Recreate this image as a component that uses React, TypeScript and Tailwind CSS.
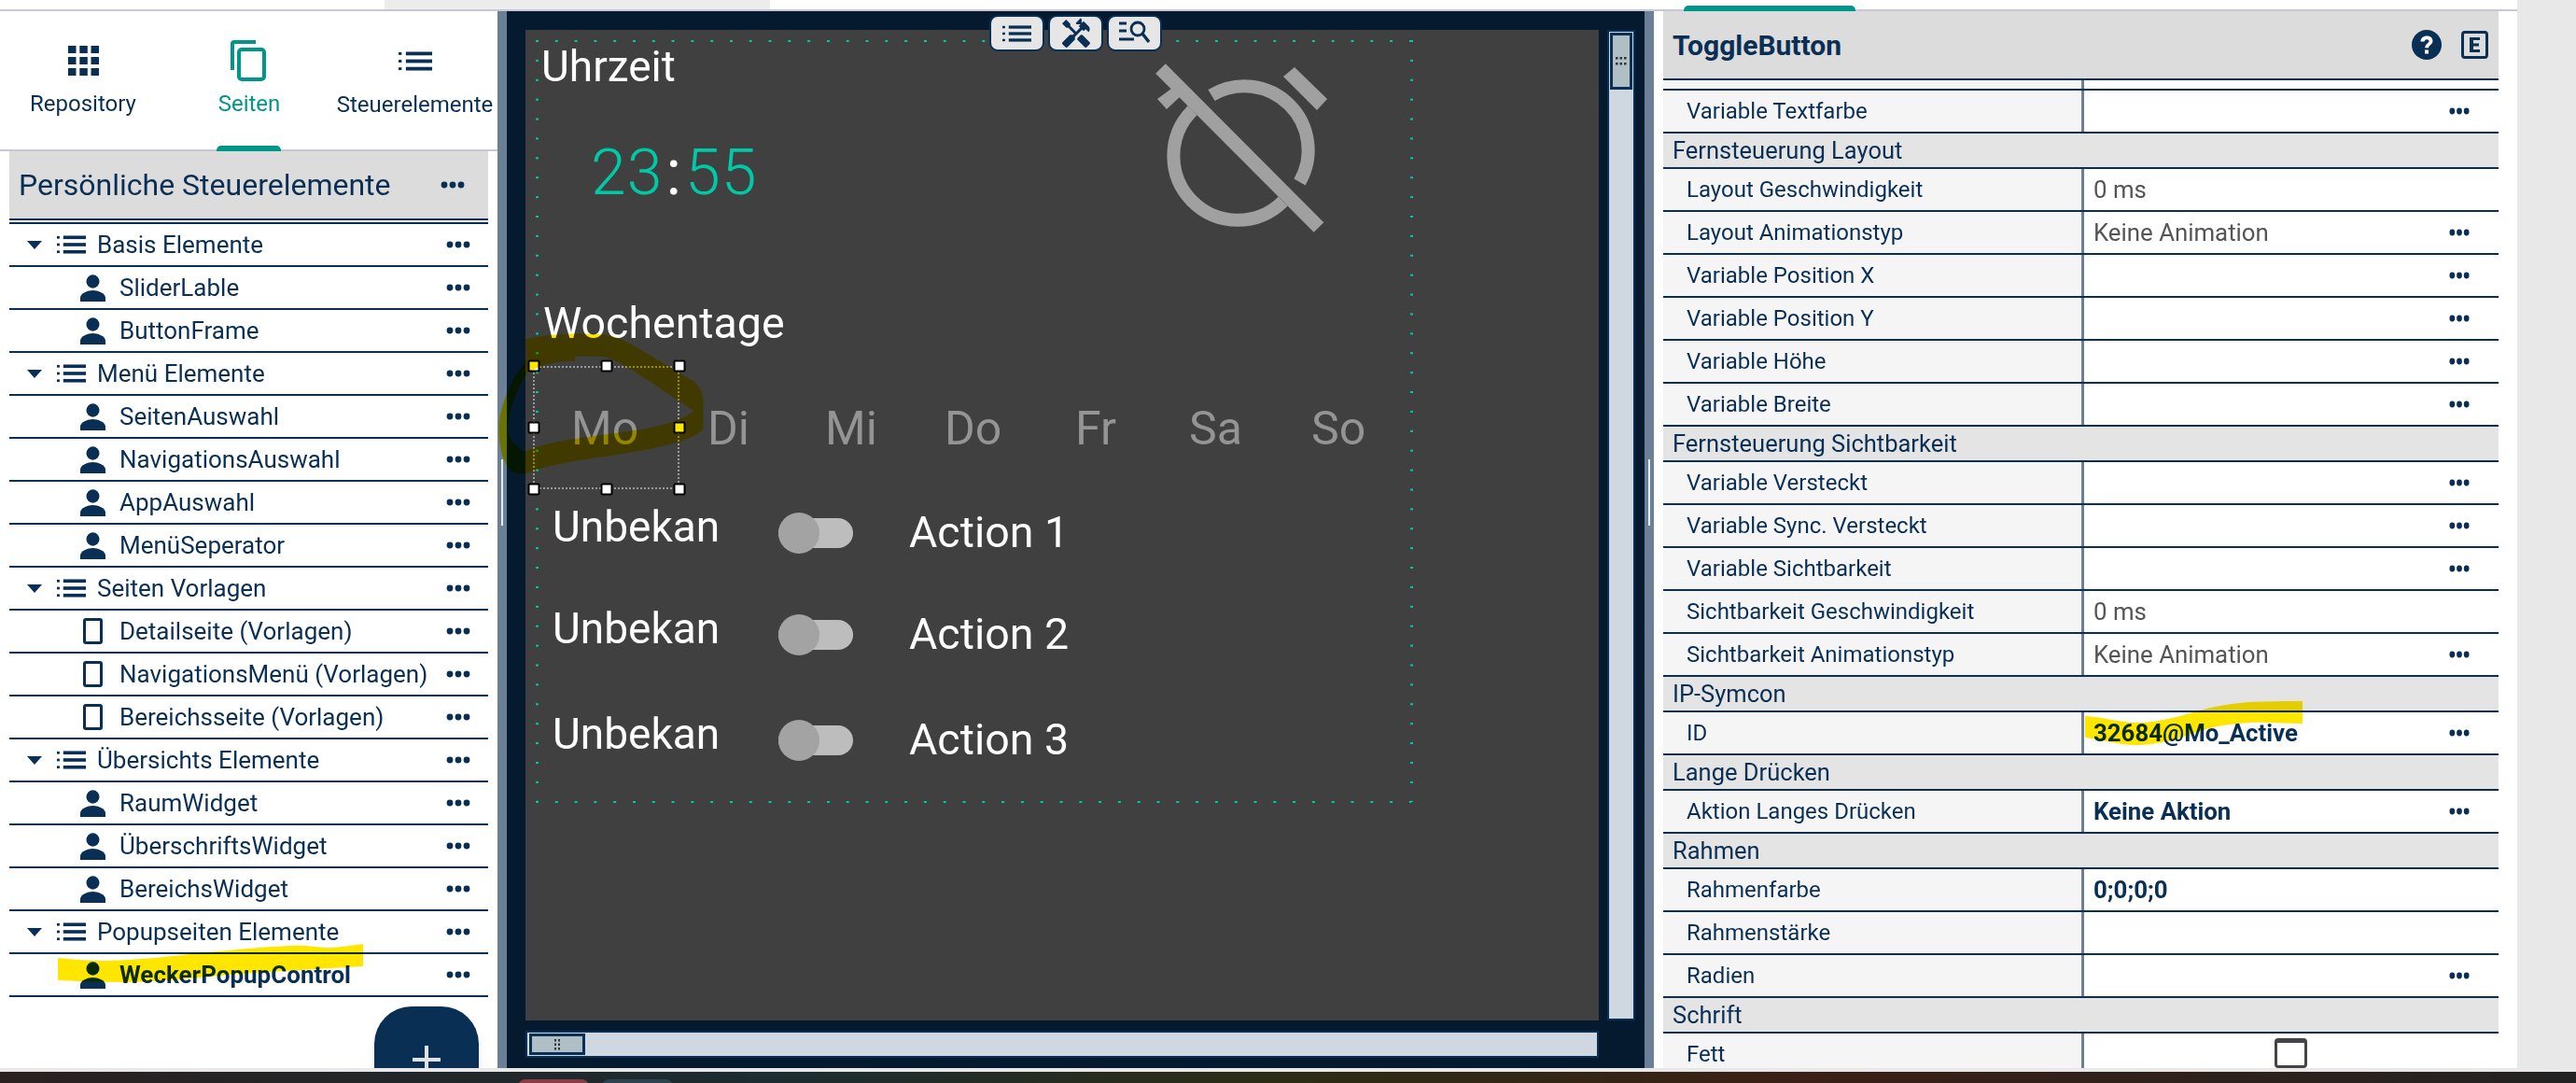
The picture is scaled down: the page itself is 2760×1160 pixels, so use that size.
import React from "react";
import { MdHandyman } from "react-icons/md";

function Dots({ className = "" }: { className?: string }) {
  return (
    <svg viewBox="0 0 26 8" className={"w-[26px] h-[8px] " + className}>
      <circle cx="4" cy="4" r="3.4" fill="#0a2f55" />
      <circle cx="13" cy="4" r="3.4" fill="#0a2f55" />
      <circle cx="22" cy="4" r="3.4" fill="#0a2f55" />
    </svg>
  );
}

function ListIcon({ className = "", color = "#0a2f55" }: { className?: string; color?: string }) {
  return (
    <svg viewBox="0 0 32 22" className={className} preserveAspectRatio="none">
      <g fill={color}>
        <rect x="0" y="1" width="3" height="3" />
        <rect x="0" y="9.5" width="3" height="3" />
        <rect x="0" y="18" width="3" height="3" />
        <rect x="7" y="0.5" width="25" height="4" />
        <rect x="7" y="9" width="25" height="4" />
        <rect x="7" y="17.5" width="25" height="4" />
      </g>
    </svg>
  );
}

function PersonIcon() {
  return (
    <svg viewBox="0 0 27 29" className="w-[27px] h-[29px]">
      <ellipse cx="13.5" cy="7.5" rx="7" ry="7.2" fill="#0a2f55" />
      <path d="M0 29v-4c0-5 8-8 13.5-8S27 20 27 25v4z" fill="#0a2f55" />
    </svg>
  );
}

type TreeItem = { t: string; kind: "group" | "person" | "page"; bold?: boolean };
const tree: TreeItem[] = [
  { t: "Basis Elemente", kind: "group" },
  { t: "SliderLable", kind: "person" },
  { t: "ButtonFrame", kind: "person" },
  { t: "Menü Elemente", kind: "group" },
  { t: "SeitenAuswahl", kind: "person" },
  { t: "NavigationsAuswahl", kind: "person" },
  { t: "AppAuswahl", kind: "person" },
  { t: "MenüSeperator", kind: "person" },
  { t: "Seiten Vorlagen", kind: "group" },
  { t: "Detailseite (Vorlagen)", kind: "page" },
  { t: "NavigationsMenü (Vorlagen)", kind: "page" },
  { t: "Bereichsseite (Vorlagen)", kind: "page" },
  { t: "Übersichts Elemente", kind: "group" },
  { t: "RaumWidget", kind: "person" },
  { t: "ÜberschriftsWidget", kind: "person" },
  { t: "BereichsWidget", kind: "person" },
  { t: "Popupseiten Elemente", kind: "group" },
  { t: "WeckerPopupControl", kind: "person", bold: true },
];

function TreeRow({ item }: { item: TreeItem }) {
  return (
    <div className="h-[46px] border-b-[2px] border-[#0a2f55] flex items-center text-[26px] text-[#0a2f55] shrink-0">
      {item.kind === "group" ? (
        <>
          <span className="ml-[14px] w-[25px] flex justify-center">
            <span className="w-0 h-0 border-l-[8px] border-r-[8px] border-t-[9px] border-l-transparent border-r-transparent border-t-[#0a2f55]" />
          </span>
          <ListIcon className="w-[31px] h-[20px] ml-[12px]" />
          <span className="ml-[12px]">{item.t}</span>
        </>
      ) : (
        <>
          <span className="ml-[76px] w-[27px] flex justify-center">
            {item.kind === "person" ? (
              <PersonIcon />
            ) : (
              <span className="block w-[21px] h-[28px] border-[3px] border-[#0a2f55] rounded-[3px]" />
            )}
          </span>
          <span className={"ml-[15px] whitespace-nowrap " + (item.bold ? "font-bold" : "")}>{item.t}</span>
        </>
      )}
      <Dots className="ml-auto mr-[19px]" />
    </div>
  );
}

function LeftPanel() {
  return (
    <div className="w-[533px] shrink-0 bg-white flex flex-col overflow-hidden relative">
      <div className="h-[150px] border-b-[2px] border-[#c8c8d4] flex shrink-0 relative text-[24px] text-[#0a2f55]">
        <div className="absolute left-[232px] w-[69px] h-[6px] bottom-[-2px] bg-[#009688] rounded-t-[5px]" />
        <div className="w-[178px] flex flex-col items-center">
          <svg viewBox="0 0 33 32" className="w-[33px] h-[32px] mt-[37px]" fill="#0a2f55">
            <rect x="0" y="0" width="8.5" height="8" /><rect x="12.3" y="0" width="8.5" height="8" /><rect x="24.5" y="0" width="8.5" height="8" />
            <rect x="0" y="12" width="8.5" height="8" /><rect x="12.3" y="12" width="8.5" height="8" /><rect x="24.5" y="12" width="8.5" height="8" />
            <rect x="0" y="24" width="8.5" height="8" /><rect x="12.3" y="24" width="8.5" height="8" /><rect x="24.5" y="24" width="8.5" height="8" />
          </svg>
          <span className="mt-[16px] leading-[28px]">Repository</span>
        </div>
        <div className="w-[178px] flex flex-col items-center text-[#009688]">
          <svg viewBox="0 0 38 44" className="w-[38px] h-[44px] mt-[31px] ml-[-2px]" fill="none" stroke="#009688" strokeWidth="4">
            <path d="M27 2H4a2 2 0 0 0-2 2v28" />
            <rect x="9" y="10" width="27" height="32" rx="3" />
          </svg>
          <span className="mt-[10px] leading-[28px]">Seiten</span>
        </div>
        <div className="flex-1 flex flex-col items-center">
          <ListIcon className="w-[36px] h-[21px] mt-[43px]" />
          <span className="mt-[22px] leading-[28px] whitespace-nowrap">Steuerelemente</span>
        </div>
      </div>
      <div className="mx-[10px] flex flex-col flex-1">
        <div className="h-[72px] bg-[#dcdcdc] shrink-0 flex items-center text-[32px] text-[#0a2f55]">
          <span className="ml-[10px]">Persönliche Steuerelemente</span>
          <Dots className="ml-auto mr-[25px]" />
        </div>
        <div className="h-[6px] border-y-[2px] border-[#0a2f55] shrink-0" />
        {tree.map((it) => (
          <TreeRow key={it.t} item={it} />
        ))}
      </div>
      <div className="absolute left-[401px] top-[1066px] w-[112px] h-[112px] rounded-[40px] bg-[#0a2f55] shadow-lg flex justify-center">
        <svg viewBox="0 0 30 30" className="w-[30px] h-[30px] mt-[42px]" fill="#dfe3e8">
          <rect x="13" y="0" width="4" height="30" />
          <rect x="0" y="13" width="30" height="4" />
        </svg>
      </div>
      <svg className="absolute left-[60px] top-[999px] w-[332px] h-[46px] mix-blend-multiply" viewBox="0 0 332 46">
        <path d="M2 15C20 17 36 18 52 18C100 17 130 12 163 9C195 6 225 3 252 2C270 1 285 5 297 4C310 3 320 1 329 0V24C290 26 250 29 209 31C160 35 115 41 75 41C50 41 25 40 2 39z" fill="#ffe600" />
      </svg>
    </div>
  );
}

function Grip({ vertical }: { vertical?: boolean }) {
  return (
    <svg viewBox="0 0 12 12" className={vertical ? "w-[12px] h-[12px]" : "w-[12px] h-[14px]"} fill="#333">
      {vertical ? (
        <>
          <rect x="0" y="1" width="2.5" height="2.5" /><rect x="4.5" y="1" width="2.5" height="2.5" /><rect x="9" y="1" width="2.5" height="2.5" />
          <rect x="0" y="7" width="2.5" height="2.5" /><rect x="4.5" y="7" width="2.5" height="2.5" /><rect x="9" y="7" width="2.5" height="2.5" />
        </>
      ) : (
        <>
          <rect x="3" y="0" width="2" height="2.5" /><rect x="7" y="0" width="2" height="2.5" />
          <rect x="3" y="4.5" width="2" height="2.5" /><rect x="7" y="4.5" width="2" height="2.5" />
          <rect x="3" y="9" width="2" height="2.5" /><rect x="7" y="9" width="2" height="2.5" />
        </>
      )}
    </svg>
  );
}

function ToolbarButton({ children }: { children: React.ReactNode }) {
  return (
    <div className="h-[39px] w-[59px] rounded-[9px] bg-[#e6e6e6] border-[2px] border-[#0a2f55] flex items-center justify-center">
      {children}
    </div>
  );
}

const dotH = "absolute h-[2px] bg-[linear-gradient(to_right,#00c9a7_3px,transparent_3px)] bg-[length:20.8px_2px]";
const dotV = "absolute w-[3px] bg-[linear-gradient(to_bottom,#00c9a7_2px,transparent_2px)] bg-[length:3px_20.9px]";

function Handle({ x, y }: { x: number; y: number }) {
  return (
    <div
      className="absolute w-[13px] h-[13px] bg-white border-[2px] border-black rounded-[2px] -translate-x-1/2 -translate-y-1/2"
      style={{ left: x, top: y }}
    />
  );
}

function AlarmOff() {
  return (
    <svg viewBox="0 0 214 214" className="absolute left-[661px] top-[22px] w-[214px] h-[214px]">
      <g fill="#a0a0a0">
        <path d="M14.2 24.8L24.8 14.2L194.3 184.2L183.7 194.8z" />
        <path d="M31 41L16 52L26 63L41 49z" />
        <path d="M163 18L198 52L187 64L151 28z" />
      </g>
      <g fill="none" stroke="#a0a0a0" strokeWidth="14">
        <path d="M74 48A68.5 68.5 0 0 1 168.5 141" />
        <path d="M53.6 64.3A68.5 68.5 0 0 0 150.6 161.7" />
      </g>
    </svg>
  );
}

function Canvas() {
  const days: [string, number][] = [
    ["Mo", 49],
    ["Di", 195],
    ["Mi", 321],
    ["Do", 449],
    ["Fr", 589],
    ["Sa", 711],
    ["So", 842],
  ];
  const rows: [string, string, number][] = [
    ["Unbekan", "Action 1", 0],
    ["Unbekan", "Action 2", 109],
    ["Unbekan", "Action 3", 222],
  ];
  return (
    <div className="flex-1 bg-[#05192f] relative min-w-0 flex flex-col">
      <div className="flex flex-1 min-h-0 pl-[20px] pr-[10px] pt-[20px]">
        <div className="flex-1 bg-[#404040] relative overflow-hidden text-white">
          <div className={dotH + " left-[11px] top-[11px] w-[938px]"} />
          <div className={dotV + " left-[11px] top-[11px] h-[816px]"} />
          <div className={dotV + " left-[948px] top-[11px] h-[816px]"} />
          <div className={dotH + " left-[11px] top-[826px] w-[938px]"} />

          <div className="absolute left-[17px] top-[12px] text-[46px] leading-[54px]">Uhrzeit</div>
          <div className="absolute left-[70px] top-[113px] text-[68px] leading-[80px] font-light text-[#00c9a7] tracking-[1px]">
            23<span className="text-white font-normal mx-[3px]">:</span>55
          </div>
          <AlarmOff />
          <div className="absolute left-[19px] top-[287px] text-[46.5px] leading-[54px]">Wochentage</div>
          {days.map(([d, x]) => (
            <div key={d} className="absolute top-[397px] text-[50px] leading-[60px] text-[#949494]" style={{ left: x }}>
              {d}
            </div>
          ))}
          {rows.map(([a, b, dy]) => (
            <React.Fragment key={b}>
              <div className="absolute left-[29px] text-[46px] leading-[54px]" style={{ top: 505 + dy }}>{a}</div>
              <div className="absolute left-[271px] w-[80px] h-[32px] bg-[#bdbdbd] rounded-full" style={{ top: 523 + dy }} />
              <div className="absolute left-[271px] w-[44px] h-[44px] bg-[#a3a3a3] rounded-full" style={{ top: 517 + dy }} />
              <div className="absolute left-[411px] text-[46.5px] leading-[54px]" style={{ top: 511 + dy }}>{b}</div>
            </React.Fragment>
          ))}
          <div className="absolute left-[8px] top-[360px] w-[157px] h-[132px] border-[2px] border-dotted border-[#9a9a9a]" />
          <Handle x={9} y={360} />
          <Handle x={87} y={360} />
          <Handle x={165} y={360} />
          <Handle x={9} y={426} />
          <Handle x={165} y={426} />
          <Handle x={9} y={492} />
          <Handle x={87} y={492} />
          <Handle x={165} y={492} />
        </div>
        <div className="w-[30px] ml-[9px] bg-[#cfd8e0] border-[2px] border-[#0a2f55] p-[1px]">
          <div className="h-[61px] bg-[#b0bec5] border-[3px] border-[#0a2f55] flex items-center justify-center">
            <Grip vertical />
          </div>
        </div>
      </div>
      <div className="h-[51px] shrink-0 pl-[20px] pr-[49px] pt-[11px]">
        <div className="h-[29px] bg-[#cfd8e0] border-[2px] border-[#0a2f55] flex">
          <div className="w-[60px] ml-[2px] my-[1px] bg-[#b0bec5] border-[3px] border-[#0a2f55] flex items-center justify-center">
            <Grip />
          </div>
        </div>
      </div>
      <div className="absolute top-[4px] left-[517px] flex gap-[4px]">
        <ToolbarButton>
          <ListIcon className="w-[31px] h-[18px]" />
        </ToolbarButton>
        <ToolbarButton>
          <MdHandyman className="w-[38px] h-[36px] text-[#0a2f55]" />
        </ToolbarButton>
        <ToolbarButton>
          <svg viewBox="0 0 33 27" className="w-[33px] h-[27px]" fill="none" stroke="#0a2f55" strokeWidth="2.8">
            <path d="M0 3h8M0 11h8M0 20h16" />
            <circle cx="20" cy="9" r="7" />
            <path d="M25 14l7 9" strokeWidth="3.4" />
          </svg>
        </ToolbarButton>
      </div>
    </div>
  );
}

type PropRow =
  | { s: string }
  | { l: string; v?: string; bold?: boolean; gray?: boolean; dots?: boolean; check?: boolean };

const props: PropRow[] = [
  { l: "Variable Textfarbe", dots: true },
  { s: "Fernsteuerung Layout" },
  { l: "Layout Geschwindigkeit", v: "0 ms", gray: true },
  { l: "Layout Animationstyp", v: "Keine Animation", gray: true, dots: true },
  { l: "Variable Position X", dots: true },
  { l: "Variable Position Y", dots: true },
  { l: "Variable Höhe", dots: true },
  { l: "Variable Breite", dots: true },
  { s: "Fernsteuerung Sichtbarkeit" },
  { l: "Variable Versteckt", dots: true },
  { l: "Variable Sync. Versteckt", dots: true },
  { l: "Variable Sichtbarkeit", dots: true },
  { l: "Sichtbarkeit Geschwindigkeit", v: "0 ms", gray: true },
  { l: "Sichtbarkeit Animationstyp", v: "Keine Animation", gray: true, dots: true },
  { s: "IP-Symcon" },
  { l: "ID", v: "32684@Mo_Active", bold: true, dots: true },
  { s: "Lange Drücken" },
  { l: "Aktion Langes Drücken", v: "Keine Aktion", bold: true, dots: true },
  { s: "Rahmen" },
  { l: "Rahmenfarbe", v: "0;0;0;0", bold: true },
  { l: "Rahmenstärke" },
  { l: "Radien", dots: true },
  { s: "Schrift" },
  { l: "Fett", check: true },
];

function PropPanel() {
  return (
    <div className="w-[925px] shrink-0 bg-white pl-[10px] pr-[20px] flex flex-col overflow-hidden relative">
      <div className="h-[72px] bg-[#dcdcdc] shrink-0 flex items-center text-[#0a2f55]">
        <span className="ml-[10px] text-[30px] font-bold">ToggleButton</span>
        <svg viewBox="0 0 32 32" className="ml-auto w-[32px] h-[32px]">
          <circle cx="16" cy="16" r="16" fill="#0a2f55" />
          <path d="M9.5 12.5c0-3.8 2.8-6 6.7-6 3.7 0 6.3 2.2 6.3 5.3 0 2.3-1.3 3.5-2.8 4.6-1.2.9-1.6 1.5-1.6 2.9h-3.8c0-2.6.9-3.7 2.4-4.9 1.1-.9 1.8-1.4 1.8-2.4 0-1.1-.9-1.8-2.3-1.8-1.4 0-2.4.9-2.5 2.3zM14 21.5h4v4h-4z" fill="#fff" />
        </svg>
        <svg viewBox="0 0 29 30" className="ml-[21px] mr-[11px] w-[29px] h-[30px]">
          <rect x="1.5" y="1.5" width="26" height="27" rx="2.5" fill="none" stroke="#0a2f55" strokeWidth="3" />
          <path d="M9 7h11v3h-7v3.5h6v3h-6V20h7v3H9z" fill="#0a2f55" />
        </svg>
      </div>
      <div className="h-[13px] shrink-0 border-y-[2px] border-[#0a2f55] flex">
        <div className="w-[451px] bg-[#f5f5f5] border-r-[3px] border-[#6b8097]" />
      </div>
      {props.map((r, i) =>
        "s" in r ? (
          <div key={i} className="h-[38px] shrink-0 bg-[#e4e4e4] border-b-[2px] border-[#0a2f55] flex items-center pl-[10px] text-[25.5px] text-[#0a2f55]">
            {r.s}
          </div>
        ) : (
          <div key={i} className="h-[46px] shrink-0 border-b-[2px] border-[#0a2f55] flex text-[24px]">
            <div className="w-[451px] bg-[#f5f5f5] border-r-[3px] border-[#6b8097] flex items-center pl-[25px] text-[#0a2f55] whitespace-nowrap">
              {r.l}
            </div>
            <div className={"flex-1 flex items-center pl-[10px] text-[25.8px] " + (r.gray ? "text-[#555555]" : "text-[#0a2f55]") + (r.bold ? " font-bold" : "")}>
              {r.v}
              {r.dots ? <Dots className="ml-auto mr-[29px] scale-x-[0.85]" /> : null}
              {r.check ? <span className="block w-[35px] h-[32px] ml-[194px] mt-[-2px] border-[3px] border-t-[5px] border-[#444] rounded-[4px] shrink-0" /> : null}
            </div>
          </div>
        )
      )}
      <svg className="absolute left-[462px] top-[739px] w-[235px] h-[48px] mix-blend-multiply" viewBox="0 0 235 48">
        <path d="M0 16C20 17 38 23 55 23C78 23 98 17 119 11C140 5 160 2 177 1C195 0 215 0 233 0V24C215 24 195 22 177 23C160 24 142 26 126 31C100 40 80 47 55 47C35 47 18 41 0 39z" fill="#ffe600" />
      </svg>
    </div>
  );
}

export default function App() {
  return (
    <div className="w-[2760px] h-[1160px] overflow-hidden relative bg-[#e8e8e8] font-['Roboto',sans-serif]">
      <div className="h-[12px] flex border-b-[2px] border-[#c8c8d4] w-[2697px] bg-white">
        <div className="ml-[412px] w-[413px] bg-[#ececec]" />
      </div>
      <div className="absolute left-[1804px] top-[6px] w-[184px] h-[6px] bg-[#009688] rounded-t-[5px]" />
      <div className="h-[1132px] flex w-[2697px] relative">
        <LeftPanel />
        <div className="w-[10px] shrink-0 bg-[#6b8097] relative">
          <div className="absolute left-[4px] top-[480px] w-[2px] h-[71px] bg-[#e8edf2]" />
        </div>
        <Canvas />
        <div className="w-[10px] shrink-0 bg-[#6b8097] relative">
          <div className="absolute left-[4px] top-[480px] w-[2px] h-[71px] bg-[#e8edf2]" />
        </div>
        <PropPanel />
      </div>
      <div className="absolute left-0 right-0 top-[1148px] h-[12px] bg-[linear-gradient(to_right,#2a2020,#1c2c30_30%,#2c2c14_50%,#3a2016_70%,#222222)]">
        <div className="absolute left-[555px] top-[8px] w-[76px] h-[12px] rounded-t-[8px] bg-[#8a3c48]" />
        <div className="absolute left-[645px] top-[8px] w-[76px] h-[12px] rounded-t-[8px] bg-[#2c4450]" />
      </div>
      <svg className="absolute left-[530px] top-[320px] w-[300px] h-[220px] mix-blend-multiply" viewBox="0 0 900 660">
        <path
          fillRule="evenodd"
          fill="#ffe600"
          d="M100 130C150 115 260 108 350 115C420 125 460 160 640 265C660 285 670 300 670 330L670 420C640 450 560 475 400 500C300 515 180 530 120 555C100 565 70 565 55 555C25 530 12 470 14 400C20 340 50 260 100 205Z M258 200L258 185L340 185C400 195 430 220 640 360C600 395 520 415 400 430C300 445 180 455 100 490C80 490 50 460 40 420C45 360 70 290 105 238C150 210 200 200 258 200Z"
        />
      </svg>
    </div>
  );
}
